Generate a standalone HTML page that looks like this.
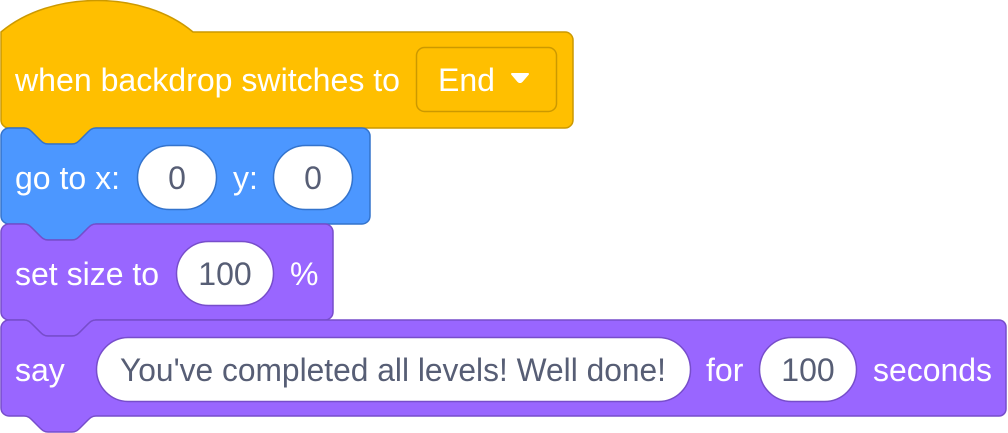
<!DOCTYPE html>
<html><head><meta charset="utf-8"><style>
html,body{margin:0;padding:0;background:#fff;width:1008px;height:433px;overflow:hidden}
svg{display:block}
text{font-family:"Liberation Sans",Arial,sans-serif;font-size:32px}
.w{fill:#fff}
.g{fill:#575E75}
</style></head><body>
<svg width="1008" height="433" viewBox="0 0 1008 433" xmlns="http://www.w3.org/2000/svg">
<path d="M1,32 c50,-42 142,-42 192,0 H565 a8,8 0 0 1 8,8 V120 a8,8 0 0 1 -8,8 H96 c-4,0 -6,2 -8,4 l-8,8 c-2,2 -4,4 -8,4 h-24 c-4,0 -6,-2 -8,-4 l-8,-8 c-2,-2 -4,-4 -8,-4 H9 a8,8 0 0 1 -8,-8 Z" fill="#FFBF00" stroke="#CC9900" stroke-width="1.5"/>
<text x="15" y="91" class="w" textLength="385" lengthAdjust="spacingAndGlyphs">when backdrop switches to</text>
<rect x="416.5" y="47.5" width="140" height="64" rx="8" fill="#FFBF00" stroke="#CC9900" stroke-width="1.5"/>
<text x="438" y="91" class="w">End</text>
<path d="M512,74 h16 l-6,7 q-2,2 -4,0 z" fill="#fff" stroke="#fff" stroke-width="2" stroke-linejoin="round"/>
<path d="M1,136 a8,8 0 0 1 8,-8 H24 c4,0 6,2 8,4 l8,8 c2,2 4,4 8,4 h24 c4,0 6,-2 8,-4 l8,-8 c2,-2 4,-4 8,-4 H362 a8,8 0 0 1 8,8 V216 a8,8 0 0 1 -8,8 H96 c-4,0 -6,2 -8,4 l-8,8 c-2,2 -4,4 -8,4 h-24 c-4,0 -6,-2 -8,-4 l-8,-8 c-2,-2 -4,-4 -8,-4 H9 a8,8 0 0 1 -8,-8 Z" fill="#4C97FF" stroke="#3373CC" stroke-width="1.5"/>
<text x="15" y="189" class="w">go to x:</text>
<rect x="137.5" y="145.5" width="79" height="64" rx="32" fill="#fff" stroke="#3373CC" stroke-width="1.5"/>
<text x="177" y="189" class="g" text-anchor="middle">0</text>
<text x="233" y="189" class="w">y:</text>
<rect x="273.5" y="145.5" width="79" height="64" rx="32" fill="#fff" stroke="#3373CC" stroke-width="1.5"/>
<text x="313" y="189" class="g" text-anchor="middle">0</text>
<path d="M1,232 a8,8 0 0 1 8,-8 H24 c4,0 6,2 8,4 l8,8 c2,2 4,4 8,4 h24 c4,0 6,-2 8,-4 l8,-8 c2,-2 4,-4 8,-4 H325 a8,8 0 0 1 8,8 V312 a8,8 0 0 1 -8,8 H96 c-4,0 -6,2 -8,4 l-8,8 c-2,2 -4,4 -8,4 h-24 c-4,0 -6,-2 -8,-4 l-8,-8 c-2,-2 -4,-4 -8,-4 H9 a8,8 0 0 1 -8,-8 Z" fill="#9966FF" stroke="#774DCB" stroke-width="1.5"/>
<text x="15" y="285" class="w">set size to</text>
<rect x="176.5" y="241.5" width="97" height="64" rx="32" fill="#fff" stroke="#774DCB" stroke-width="1.5"/>
<text x="225" y="285" class="g" text-anchor="middle">100</text>
<text x="290" y="285" class="w">%</text>
<path d="M1,328 a8,8 0 0 1 8,-8 H24 c4,0 6,2 8,4 l8,8 c2,2 4,4 8,4 h24 c4,0 6,-2 8,-4 l8,-8 c2,-2 4,-4 8,-4 H999 a7,7 0 0 1 7,7 V409 a7,7 0 0 1 -7,7 H96 c-4,0 -6,2 -8,4 l-8,8 c-2,2 -4,4 -8,4 h-24 c-4,0 -6,-2 -8,-4 l-8,-8 c-2,-2 -4,-4 -8,-4 H9 a8,8 0 0 1 -8,-8 Z" fill="#9966FF" stroke="#774DCB" stroke-width="1.5"/>
<text x="15" y="381" class="w">say</text>
<rect x="96.5" y="337.5" width="594" height="64" rx="32" fill="#fff" stroke="#774DCB" stroke-width="1.5"/>
<text x="393" y="381" class="g" text-anchor="middle" textLength="546" lengthAdjust="spacingAndGlyphs">You've completed all levels! Well done!</text>
<text x="706" y="381" class="w">for</text>
<rect x="759.5" y="337.5" width="97" height="64" rx="32" fill="#fff" stroke="#774DCB" stroke-width="1.5"/>
<text x="808" y="381" class="g" text-anchor="middle">100</text>
<text x="873" y="381" class="w" textLength="119" lengthAdjust="spacingAndGlyphs">seconds</text>
</svg>
</body></html>
